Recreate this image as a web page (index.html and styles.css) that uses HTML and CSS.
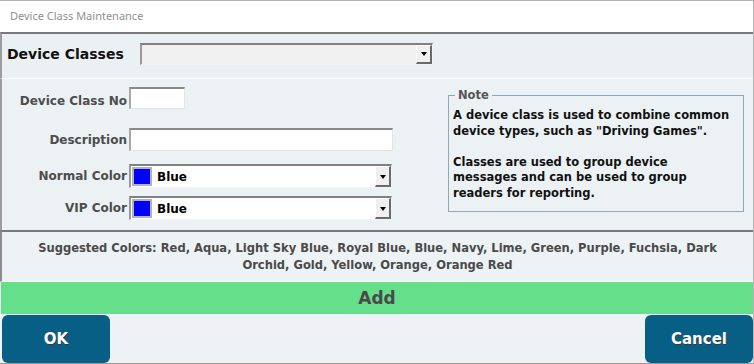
FILE: index.html
```html
<!DOCTYPE html>
<html>
<head>
<meta charset="utf-8">
<link rel="stylesheet" href="styles.css">
</head>
<body>
<div class="window">
  <div class="titlebar">Device Class Maintenance</div>
  <div class="header">
    <span class="header-label">Device Classes</span>
    <div class="combo combo-classes">
      <div class="combo-value"></div>
      <div class="combo-btn"><span class="tri"></span></div>
    </div>
  </div>
  <div class="main">
    <div class="form">
      <div class="row row-no">
        <span class="label label-no">Device Class No</span>
        <div class="input input-no"></div>
      </div>
      <div class="row row-desc">
        <span class="label">Description</span>
        <div class="input input-desc"></div>
      </div>
      <div class="row row-normal">
        <span class="label">Normal Color</span>
        <div class="combo combo-color">
          <div class="combo-value"><span class="swatch"></span><span class="color-name">Blue</span></div>
          <div class="combo-btn"><span class="tri"></span></div>
        </div>
      </div>
      <div class="row row-vip">
        <span class="label">VIP Color</span>
        <div class="combo combo-color">
          <div class="combo-value"><span class="swatch"></span><span class="color-name">Blue</span></div>
          <div class="combo-btn"><span class="tri"></span></div>
        </div>
      </div>
    </div>
    <fieldset class="note">
      <legend>Note</legend>
      <p>A device class is used to combine common device types, such as "Driving Games".</p>
      <p>Classes are used to group device messages and can be used to group readers for reporting.</p>
    </fieldset>
  </div>
  <div class="suggest">
    <p>Suggested Colors: Red, Aqua, Light Sky Blue, Royal Blue, Blue, Navy, Lime, Green, Purple, Fuchsia, Dark Orchid, Gold, Yellow, Orange, Orange Red</p>
  </div>
  <div class="add">Add</div>
  <div class="buttons">
    <button class="btn">OK</button>
    <button class="btn">Cancel</button>
  </div>
</div>
</body>
</html>
```

FILE: styles.css
```css
* { box-sizing: border-box; }
html, body { margin: 0; padding: 0; }
body {
  width: 754px;
  height: 364px;
  overflow: hidden;
  background: #ffffff;
  font-family: "DejaVu Sans", sans-serif;
}
.window {
  width: 754px;
  height: 364px;
  display: flex;
  flex-direction: column;
  border-top: 1px solid #b4b4b4;
  border-right: 1px solid #b4b4b4;
  border-bottom: 1px solid #9a9a9a;
  background: #eef2f5;
}
.titlebar {
  height: 31px;
  flex: none;
  background: #ffffff;
  color: #8f8f8f;
  font-family: "Noto Sans", "Open Sans", sans-serif;
  font-size: 11px;
  display: flex;
  align-items: center;
  padding-left: 10px;
  padding-bottom: 2px;
}
.header {
  height: 47px;
  flex: none;
  display: flex;
  align-items: center;
  background: #ebf0f3;
  border-top: 2px solid #787878;
  border-left: 2px solid #9c9c9c;
  border-bottom: 1px solid #ffffff;
  padding: 0 0 5px 5px;
}
.header-label {
  font-weight: bold;
  font-size: 14px;
  color: #111111;
  width: 133px;
}
.combo {
  display: flex;
  height: 22px;
  border-top: 2px solid #808080;
  border-left: 2px solid #9a9a9a;
  border-bottom: 1px solid #f4f4f4;
  border-right: 1px solid #f4f4f4;
  background: #ffffff;
}
.combo-classes {
  width: 293px;
  background: #f0f0f0;
}
.combo-value {
  flex: 1;
  display: flex;
  align-items: center;
}
.combo-btn {
  width: 16px;
  flex: none;
  background: #f0f0f0;
  border-top: 1px solid #ffffff;
  border-left: 1px solid #ffffff;
  border-right: 2px solid #6a6a6a;
  border-bottom: 2px solid #6a6a6a;
  display: flex;
  align-items: center;
  justify-content: center;
}
.tri {
  width: 0;
  height: 0;
  border-left: 3.5px solid transparent;
  border-right: 3.5px solid transparent;
  border-top: 4px solid #000000;
  margin-top: 1px;
}
.main {
  height: 151px;
  flex: none;
  display: flex;
  background: #ecf1f4;
  border-left: 2px solid #9c9c9c;
}
.form {
  display: flex;
  flex-direction: column;
  padding-top: 8px;
}
.row {
  display: flex;
  align-items: center;
}
.row-desc { margin-top: 19px; }
.row-normal { margin-top: 13px; }
.row-vip { margin-top: 8px; }
.label {
  width: 125px;
  margin-right: 2px;
  text-align: right;
  font-weight: bold;
  font-size: 12px;
  color: #4d4d4d;
}
.label-no { padding-top: 6px; }
.input {
  background: #ffffff;
  border-top: 2px solid #8a8a8a;
  border-left: 2px solid #a8a8a8;
  border-bottom: 1px solid #e4e4e4;
  border-right: 1px solid #e4e4e4;
}
.input-no { width: 56px; height: 22px; }
.input-desc { width: 264px; height: 23px; }
.combo-color { width: 263px; height: 24px; }
.combo-color .combo-btn { height: 21px; }
.swatch {
  width: 20px;
  height: 19px;
  margin-left: 1px;
  background: #0000ff;
  border: 2px solid #b4b4b4;
  flex: none;
}
.color-name {
  margin-left: 5px;
  font-weight: bold;
  font-size: 12px;
  color: #000000;
}
.note {
  margin: 9px 9px 0 auto;
  width: 296px;
  height: 124px;
  border: 1px solid #8ea8b8;
  padding: 6px 10px 0 4px;
}
.note legend {
  font-weight: bold;
  font-size: 11.5px;
  color: #555555;
  padding: 0 3px;
  margin-left: 2px;
  line-height: 14px;
}
.note p {
  margin: 0 0 15.6px 0;
  font-weight: bold;
  font-size: 11.5px;
  line-height: 15.6px;
  color: #111111;
}
.suggest {
  height: 52px;
  flex: none;
  background: #edf2f4;
  border-top: 2px solid #7a7a7a;
  border-left: 2px solid #8c8c8c;
  border-bottom: 1px solid #ffffff;
  display: flex;
  align-items: center;
  justify-content: center;
  padding-bottom: 2px;
}
.suggest p {
  margin: 0;
  flex: none;
  width: 705px;
  text-align: center;
  font-family: "DejaVu Sans Condensed", "DejaVu Sans", sans-serif;
  font-stretch: condensed;
  font-weight: bold;
  font-size: 12.8px;
  line-height: 17px;
  color: #4a4a4a;
}
.add {
  height: 32px;
  flex: none;
  background: #66df8a;
  display: flex;
  align-items: center;
  justify-content: center;
  font-weight: bold;
  font-size: 17px;
  color: #4a4a4a;
  margin-left: 1px;
}
.buttons {
  flex: 1;
  display: flex;
  justify-content: space-between;
  align-items: stretch;
  padding: 1px 0 0 2px;
  background: #eef2f5;
}
.btn {
  width: 108px;
  border: none;
  border-radius: 6px;
  background: #075f86;
  color: #ffffff;
  font-family: "DejaVu Sans", sans-serif;
  font-weight: bold;
  font-size: 15px;
  text-shadow: 1px 1px 0 #3a3a3a;
  padding: 0;
}
```
